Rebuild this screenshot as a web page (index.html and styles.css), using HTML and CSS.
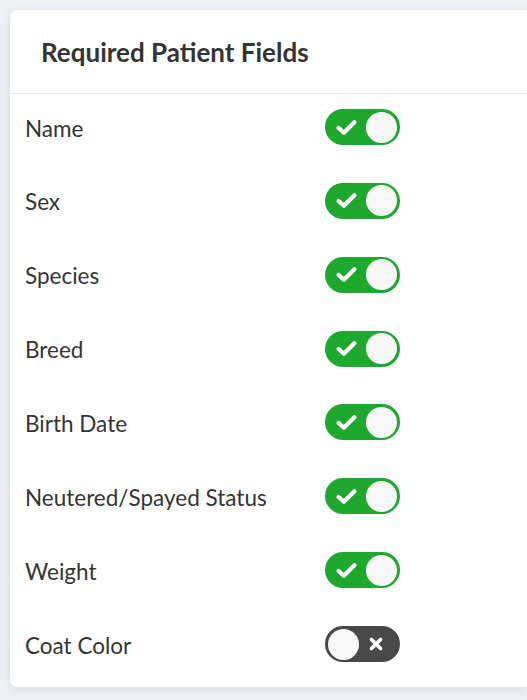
FILE: index.html
```html
<!DOCTYPE html>
<html>
<head>
<meta charset="utf-8">
<link rel="stylesheet" href="styles.css">
</head>
<body>
<div class="card">
  <div class="card-header">Required Patient Fields</div>
  <div class="fields">
    <div class="row"><span class="label">Name</span><span class="toggle on"><svg class="ico" viewBox="0 0 20 16"><path d="M2.5 8.5 L7.5 13 L17.5 3" fill="none" stroke="#fff" stroke-width="4" stroke-linecap="round" stroke-linejoin="round"/></svg><span class="knob"></span></span></div>
    <div class="row"><span class="label">Sex</span><span class="toggle on"><svg class="ico" viewBox="0 0 20 16"><path d="M2.5 8.5 L7.5 13 L17.5 3" fill="none" stroke="#fff" stroke-width="4" stroke-linecap="round" stroke-linejoin="round"/></svg><span class="knob"></span></span></div>
    <div class="row"><span class="label">Species</span><span class="toggle on"><svg class="ico" viewBox="0 0 20 16"><path d="M2.5 8.5 L7.5 13 L17.5 3" fill="none" stroke="#fff" stroke-width="4" stroke-linecap="round" stroke-linejoin="round"/></svg><span class="knob"></span></span></div>
    <div class="row"><span class="label">Breed</span><span class="toggle on"><svg class="ico" viewBox="0 0 20 16"><path d="M2.5 8.5 L7.5 13 L17.5 3" fill="none" stroke="#fff" stroke-width="4" stroke-linecap="round" stroke-linejoin="round"/></svg><span class="knob"></span></span></div>
    <div class="row"><span class="label">Birth Date</span><span class="toggle on"><svg class="ico" viewBox="0 0 20 16"><path d="M2.5 8.5 L7.5 13 L17.5 3" fill="none" stroke="#fff" stroke-width="4" stroke-linecap="round" stroke-linejoin="round"/></svg><span class="knob"></span></span></div>
    <div class="row"><span class="label">Neutered/Spayed Status</span><span class="toggle on"><svg class="ico" viewBox="0 0 20 16"><path d="M2.5 8.5 L7.5 13 L17.5 3" fill="none" stroke="#fff" stroke-width="4" stroke-linecap="round" stroke-linejoin="round"/></svg><span class="knob"></span></span></div>
    <div class="row"><span class="label">Weight</span><span class="toggle on"><svg class="ico" viewBox="0 0 20 16"><path d="M2.5 8.5 L7.5 13 L17.5 3" fill="none" stroke="#fff" stroke-width="4" stroke-linecap="round" stroke-linejoin="round"/></svg><span class="knob"></span></span></div>
    <div class="row"><span class="label">Coat Color</span><span class="toggle off"><span class="knob"></span><svg class="ico" viewBox="0 0 16 16"><path d="M3.5 3.5 L12.5 12.5 M12.5 3.5 L3.5 12.5" fill="none" stroke="#fff" stroke-width="3.8" stroke-linecap="round"/></svg></span></div>
  </div>
</div>
</body>
</html>
```

FILE: styles.css
```css
html, body {
  margin: 0;
  padding: 0;
  overflow: hidden;
}
body {
  background: #edf1f4;
  padding: 10px 0 0 10px;
  height: 700px;
  box-sizing: border-box;
  font-family: Lato, "Liberation Sans", sans-serif;
  color: #343434;
}
.card {
  width: 517px;
  background: #fff;
  border-radius: 7px 0 0 7px;
  box-shadow: 0 2px 8px rgba(40, 60, 80, 0.12);
}
.card-header {
  height: 84px;
  box-sizing: border-box;
  padding: 0 0 0 31px;
  display: flex;
  align-items: center;
  font-size: 26px;
  line-height: 30px;
  font-weight: 700;
  color: #343434;
  border-bottom: 1px solid #e4e9ee;
}
.fields {
  padding: 15px 0 25px 15px;
}
.row {
  display: grid;
  grid-template-columns: 300px 75px;
  align-items: center;
  height: 36px;
  margin-bottom: 37.86px;
}
.row:last-child {
  margin-bottom: 0;
}
.label {
  font-size: 22.5px;
  line-height: 28px;
  padding-top: 3px;
}
.toggle {
  width: 75px;
  height: 36px;
  border-radius: 18px;
  box-sizing: border-box;
  display: flex;
  align-items: center;
  justify-content: space-between;
  padding: 0 3px 0 11px;
}
.toggle.on {
  background: #1fa82e;
}
.toggle.off {
  background: #484848;
  padding: 0 16px 0 3px;
}
.knob {
  width: 31px;
  height: 31px;
  border-radius: 50%;
  background: #f8f8f8;
}
.toggle.on .ico {
  width: 21px;
  height: 17px;
}
.toggle.off .ico {
  width: 16px;
  height: 16px;
}
```
